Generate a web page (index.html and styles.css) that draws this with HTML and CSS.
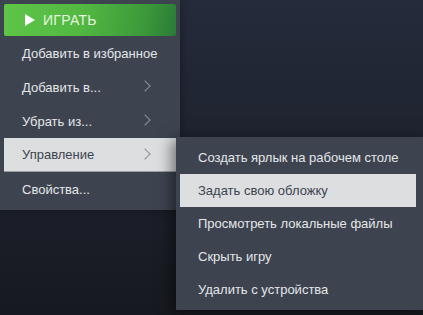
FILE: index.html
```html
<!DOCTYPE html>
<html lang="ru">
<head>
  <meta charset="UTF-8">
  <title>Контекстное меню</title>
  <link rel="stylesheet" href="styles.css">
</head>
<body>
  <div class="menu">
    <button class="play">
      <svg class="play-icon" width="10" height="12" viewBox="0 0 10 12"><path d="M0 0 L10 6 L0 12 Z" fill="#ffffff"/></svg>
      <span>ИГРАТЬ</span>
    </button>
    <div class="item">Добавить в избранное</div>
    <div class="item has-sub">Добавить в...<span class="chev"></span></div>
    <div class="item has-sub">Убрать из...<span class="chev"></span></div>
    <div class="item has-sub active">Управление<span class="chev"></span>
      <div class="submenu">
        <div class="item">Создать ярлык на рабочем столе</div>
        <div class="item active">Задать свою обложку</div>
        <div class="item">Просмотреть локальные файлы</div>
        <div class="item">Скрыть игру</div>
        <div class="item">Удалить с устройства</div>
      </div>
    </div>
    <div class="item">Свойства...</div>
  </div>
</body>
</html>
```

FILE: styles.css
```css
body {
  margin: 0;
  height: 315px;
  background: linear-gradient(180deg, #252b3b 0%, #1d212c 60%, #16191f 100%);
  font-family: "Liberation Sans", Arial, sans-serif;
  overflow: hidden;
}

.menu {
  width: 180px;
  background-color: #3d4450;
  padding: 4px 0 4px 4px;
  box-sizing: border-box;
  box-shadow: 0 0 10px rgba(0, 0, 0, 0.35);
}

.play {
  display: flex;
  align-items: center;
  width: 172px;
  height: 32px;
  border: none;
  border-radius: 2px;
  padding: 0 0 0 21px;
  background: linear-gradient(100deg, #5ec548 0%, #52b842 45%, #3c9a3a 80%, #2a7b36 100%);
  color: #e6f5df;
  font-family: inherit;
  font-size: 14px;
  letter-spacing: 0.3px;
  cursor: pointer;
}

.play-icon {
  margin-right: 8px;
}

.item {
  position: relative;
  display: flex;
  align-items: center;
  width: 172px;
  height: 34px;
  padding-left: 18px;
  box-sizing: border-box;
  color: #e4e6e8;
  font-size: 13px;
  cursor: pointer;
}

.item.active {
  background-color: #dcdedf;
  color: #3d4450;
  border-bottom: 1px solid #9a9fa6;
}

.chev {
  position: absolute;
  left: 137px;
  top: 12px;
  width: 7px;
  height: 7px;
  border-top: 1px solid #8b929a;
  border-right: 1px solid #8b929a;
  transform: rotate(45deg);
}

.submenu {
  position: absolute;
  left: 172px;
  top: -1px;
  width: 244px;
  padding: 4px;
  background-color: #3d4450;
  box-shadow: -4px 2px 14px rgba(0, 0, 0, 0.5);
}

.submenu .item {
  width: 236px;
  height: 33px;
  padding-left: 18px;
}

.submenu .item.active {
  color: #3d4450;
  border-bottom: none;
}
```
